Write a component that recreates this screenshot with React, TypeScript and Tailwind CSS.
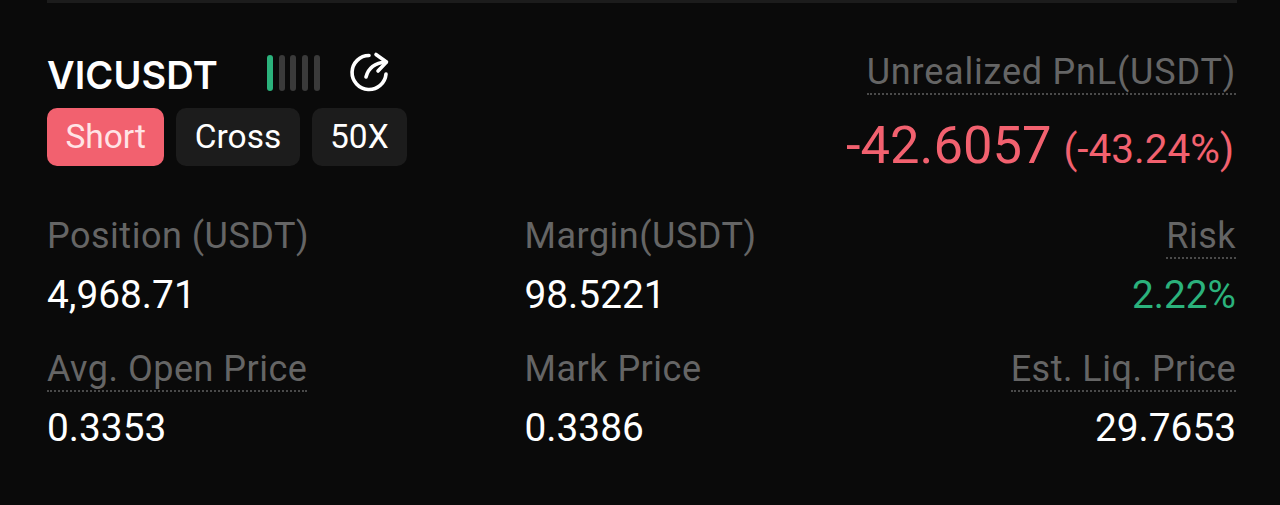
import React from 'react';

const Label = ({ text, dotted, wide }: { text: string; dotted?: boolean; wide?: boolean }) => (
  <span
    className={`inline-block h-[42px] text-[36px] leading-[38px] text-[#656565] ${wide ? 'tracking-[0.8px]' : 'tracking-[0.5px]'} ${
      dotted ? 'border-b-2 border-dotted border-[#4a4a4a]' : ''
    }`}
  >
    {text}
  </span>
);

const Stat = ({
  label,
  value,
  dotted,
  right,
  valueClass,
}: {
  label: string;
  value: string;
  dotted?: boolean;
  right?: boolean;
  valueClass?: string;
}) => (
  <div className={`flex flex-col ${right ? 'items-end' : 'items-start'}`}>
    <Label text={label} dotted={dotted} />
    <span className={`mt-[14px] text-[38.800px] leading-[44px] ${valueClass ?? 'text-white'}`}>{value}</span>
  </div>
);

const Tag = ({ text, active }: { text: string; active?: boolean }) => (
  <span
    className={`flex h-[58px] items-center rounded-[10px] px-[18.400px] pt-px text-[33.500px] ${
      active ? 'bg-[#f2616f] text-[#ffe4e6]' : 'bg-[#1c1c1c] text-white'
    }`}
  >
    {text}
  </span>
);

export default function App() {
  return (
    <div className="h-[505px] w-[1280px] overflow-hidden bg-[#0a0a0a] pl-[47px] pr-[44px] font-['Roboto',sans-serif]">
      <div className="-mr-px h-[3px] bg-[#1c1c1c]" />

      {/* header */}
      <div className="mt-[50px] flex items-start justify-between">
        <div className="flex flex-col">
          <div className="flex h-[40px] items-center">
            <span className="mt-[4px] w-[220px] font-['Inter',sans-serif] text-[38px] font-semibold tracking-[0.1px] text-white">VICUSDT</span>
            <div className="flex gap-[5.700px]">
              <span className="h-[36px] w-[6px] rounded-full bg-[#2bb27c]" />
              <span className="h-[36px] w-[6px] rounded-full bg-[#3a3a3a]" />
              <span className="h-[36px] w-[6px] rounded-full bg-[#3a3a3a]" />
              <span className="h-[36px] w-[6px] rounded-full bg-[#3a3a3a]" />
              <span className="h-[36px] w-[6px] rounded-full bg-[#3a3a3a]" />
            </div>
            <svg className="ml-[27px]" width="44" height="44" viewBox="0 0 44 44" fill="none" stroke="#fff" strokeWidth="3.600" strokeLinecap="round" strokeLinejoin="round">
              <path d="M22 4.500A17 17 0 1 0 39 23" />
              <path d="M19 26c2-8 8-14 20-15" />
              <path d="M29 3.500l10.500 7.500-8.500 9" />
            </svg>
          </div>
          <div className="mt-[15px] flex gap-[12px]">
            <Tag text="Short" active />
            <Tag text="Cross" />
            <Tag text="50X" />
          </div>
        </div>

        <div className="flex flex-col items-end">
          <Label text="Unrealized PnL(USDT)" dotted wide />
          <div className="mt-[20px] flex items-baseline pr-[2px] text-[#f2616f]">
            <span className="text-[52.500px] leading-[60px]">-42.6057</span>
            <span className="ml-[12px] text-[40.500px] leading-[60px]">(-43.24%)</span>
          </div>
        </div>
      </div>

      {/* stats */}
      <div className="mt-[38px] grid grid-cols-[477.500px_1fr_auto] gap-y-[33px]">
        <Stat label="Position (USDT)" value="4,968.71" />
        <Stat label="Margin(USDT)" value="98.5221" />
        <Stat label="Risk" value="2.22%" dotted right valueClass="text-[#2bb27c]" />
        <Stat label="Avg. Open Price" value="0.3353" dotted />
        <Stat label="Mark Price" value="0.3386" />
        <Stat label="Est. Liq. Price" value="29.7653" dotted right />
      </div>
    </div>
  );
}
